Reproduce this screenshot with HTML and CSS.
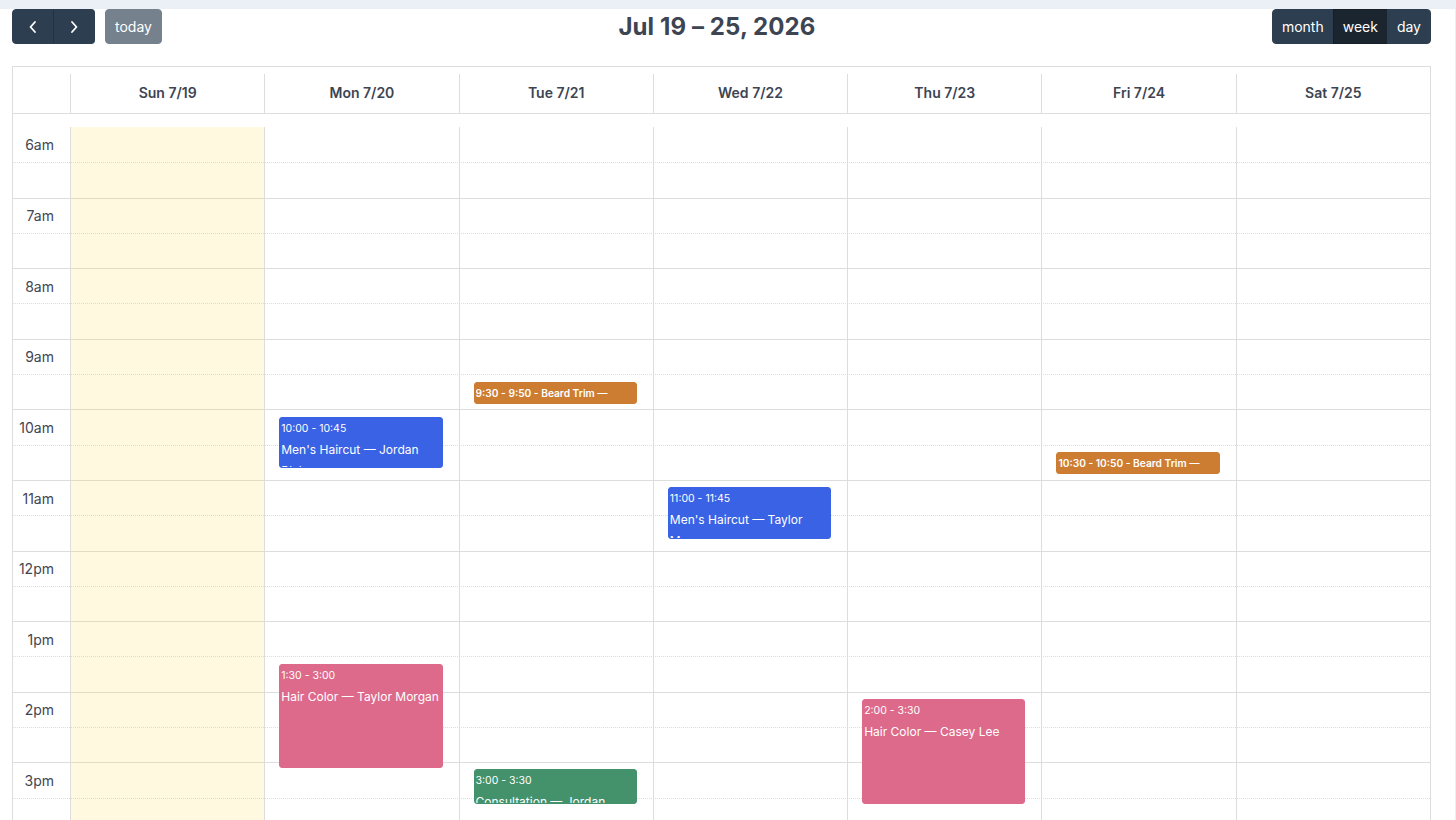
FILE: index.html
```html
<!DOCTYPE html>
<html lang="en">
<head>
<meta charset="utf-8">
<title>Calendar — Week</title>
<link rel="stylesheet" href="styles.css">
</head>
<body>
<div class="panel">
  <div class="toolbar">
    <div class="tb-left">
      <div class="btn-group">
        <button class="btn btn-icon" aria-label="prev">
          <svg width="10" height="14" viewBox="0 0 10 14"><polyline points="7,2 2.5,7 7,12" fill="none" stroke="#fff" stroke-width="1.8" stroke-linecap="round" stroke-linejoin="round"/></svg>
        </button>
        <button class="btn btn-icon" aria-label="next">
          <svg width="10" height="14" viewBox="0 0 10 14"><polyline points="3,2 7.5,7 3,12" fill="none" stroke="#fff" stroke-width="1.8" stroke-linecap="round" stroke-linejoin="round"/></svg>
        </button>
      </div>
      <button class="btn btn-today">today</button>
    </div>
    <h2 class="title">Jul 19 – 25, 2026</h2>
    <div class="btn-group">
      <button class="btn btn-view">month</button>
      <button class="btn btn-view active">week</button>
      <button class="btn btn-view">day</button>
    </div>
  </div>

  <div class="cal">
    <div class="head">
      <div class="hcell axis"></div>
      <div class="hcell">Sun 7/19</div>
      <div class="hcell">Mon 7/20</div>
      <div class="hcell">Tue 7/21</div>
      <div class="hcell">Wed 7/22</div>
      <div class="hcell">Thu 7/23</div>
      <div class="hcell">Fri 7/24</div>
      <div class="hcell">Sat 7/25</div>
    </div>
    <div class="spacer"></div>
    <div class="tgrid">
      <div class="slots">
        <div class="slot first"><div class="label">6am</div><div class="lane"></div></div>
        <div class="slot half"><div class="label"></div><div class="lane"></div></div>
        <div class="slot"><div class="label">7am</div><div class="lane"></div></div>
        <div class="slot half"><div class="label"></div><div class="lane"></div></div>
        <div class="slot"><div class="label">8am</div><div class="lane"></div></div>
        <div class="slot half"><div class="label"></div><div class="lane"></div></div>
        <div class="slot"><div class="label">9am</div><div class="lane"></div></div>
        <div class="slot half"><div class="label"></div><div class="lane"></div></div>
        <div class="slot"><div class="label">10am</div><div class="lane"></div></div>
        <div class="slot half"><div class="label"></div><div class="lane"></div></div>
        <div class="slot"><div class="label">11am</div><div class="lane"></div></div>
        <div class="slot half"><div class="label"></div><div class="lane"></div></div>
        <div class="slot"><div class="label">12pm</div><div class="lane"></div></div>
        <div class="slot half"><div class="label"></div><div class="lane"></div></div>
        <div class="slot"><div class="label">1pm</div><div class="lane"></div></div>
        <div class="slot half"><div class="label"></div><div class="lane"></div></div>
        <div class="slot"><div class="label">2pm</div><div class="lane"></div></div>
        <div class="slot half"><div class="label"></div><div class="lane"></div></div>
        <div class="slot"><div class="label">3pm</div><div class="lane"></div></div>
        <div class="slot half"><div class="label"></div><div class="lane"></div></div>
        <div class="slot"><div class="label">4pm</div><div class="lane"></div></div>
        <div class="slot half"><div class="label"></div><div class="lane"></div></div>
      </div>
      <div class="cols">
        <div class="col-axis"></div>
        <div class="col today"></div>
        <div class="col">
          <div class="ev ev-blue" style="top:289.9px;height:51.5px">
            <div class="ev-time">10:00 - 10:45</div>
            <div class="ev-title">Men's Haircut — Jordan Blake</div>
          </div>
          <div class="ev ev-pink" style="top:537px;height:104.4px">
            <div class="ev-time">1:30 - 3:00</div>
            <div class="ev-title">Hair Color — Taylor Morgan</div>
          </div>
        </div>
        <div class="col">
          <div class="ev ev-orange ev-short" style="top:254.6px;height:22px">
            <div class="ev-line">9:30 - 9:50 - Beard Trim —</div>
          </div>
          <div class="ev ev-green" style="top:642.2px;height:34.8px">
            <div class="ev-time">3:00 - 3:30</div>
            <div class="ev-title">Consultation — Jordan</div>
          </div>
        </div>
        <div class="col">
          <div class="ev ev-blue" style="top:360px;height:51.5px">
            <div class="ev-time">11:00 - 11:45</div>
            <div class="ev-title">Men's Haircut — Taylor Morgan</div>
          </div>
        </div>
        <div class="col">
          <div class="ev ev-pink" style="top:572.3px;height:104.4px">
            <div class="ev-time">2:00 - 3:30</div>
            <div class="ev-title">Hair Color — Casey Lee</div>
          </div>
        </div>
        <div class="col">
          <div class="ev ev-orange ev-short" style="top:325.2px;height:22px">
            <div class="ev-line">10:30 - 10:50 - Beard Trim —</div>
          </div>
        </div>
        <div class="col"></div>
      </div>
    </div>
  </div>
</div>
</body>
</html>
```

FILE: styles.css
```css
* { box-sizing: border-box; }

html, body {
  margin: 0;
  padding: 0;
  height: 100%;
  overflow: hidden;
}

body {
  background: #ebf0f7;
  font-family: Inter, "Liberation Sans", Arial, sans-serif;
  color: #3d4452;
}

.panel {
  margin-top: 9px;
  margin-right: 1px;
  background: #fff;
  padding: 0 24px 0 12px;
  min-height: 1200px;
}

/* toolbar */
.toolbar {
  height: 35px;
  display: flex;
  align-items: center;
  justify-content: space-between;
  margin-bottom: 22px;
}

.tb-left {
  display: flex;
  align-items: center;
  gap: 10px;
}

.btn-group {
  display: flex;
  height: 35px;
}

.btn {
  height: 35px;
  border: 1px solid #2c3e50;
  background: #2c3e50;
  color: #fff;
  font-family: Inter, "Liberation Sans", Arial, sans-serif;
  font-size: 14px;
  line-height: 33px;
  padding: 0 9px;
  margin: 0;
  border-radius: 0;
  display: flex;
  align-items: center;
  justify-content: center;
  cursor: pointer;
}

.btn-group .btn:first-child {
  border-top-left-radius: 4px;
  border-bottom-left-radius: 4px;
}

.btn-group .btn:last-child {
  border-top-right-radius: 4px;
  border-bottom-right-radius: 4px;
}

.btn-group .btn + .btn {
  margin-left: -1px;
}

.btn-icon {
  width: 42px;
  padding: 0;
}

.btn-icon + .btn-icon {
  border-left-color: #24323f;
}

.btn-today {
  width: 57px;
  padding: 0;
  border-radius: 4px;
  opacity: 0.65;
}

.btn-view.active {
  background: #1a252f;
  border-color: #151e27;
}

.title {
  margin: 0;
  font-size: 24px;
  font-weight: 700;
  color: #3d4452;
  letter-spacing: 0.1px;
}

/* calendar */
.cal {
  border: 1px solid #ddd;
}

.head {
  display: grid;
  grid-template-columns: 57px repeat(7, 1fr);
  padding-top: 7px;
  border-bottom: 1px solid #ddd;
}

.hcell {
  height: 39px;
  display: flex;
  align-items: center;
  justify-content: center;
  font-size: 14px;
  font-weight: 600;
  color: #3d4452;
  border-left: 1px solid #ddd;
  padding-bottom: 2px;
}

.hcell.axis {
  border-left: 0;
}

.spacer {
  height: 13px;
}

.tgrid {
  position: relative;
}

.slot {
  height: 35.3px;
  display: grid;
  grid-template-columns: 57px 1fr;
  border-top: 1px solid #ddd;
}

.slot.half {
  border-top: 1px dotted #ddd;
}

.slot.first {
  border-top: 0;
}

.label {
  display: flex;
  align-items: center;
  justify-content: flex-end;
  padding-right: 16px;
  font-size: 14px;
  color: #3f4652;
}

.cols {
  position: absolute;
  top: 0;
  left: 0;
  right: 0;
  bottom: 0;
  display: grid;
  grid-template-columns: 57px repeat(7, 1fr);
}

.col {
  position: relative;
  border-left: 1px solid #ddd;
}

.col.today {
  background: rgba(255, 220, 40, 0.15);
}

/* events */
.ev {
  position: absolute;
  left: 14px;
  right: 16px;
  border: 1px solid;
  border-radius: 3px;
  color: #fff;
  overflow: hidden;
  padding: 3px 1px 0;
}

.ev-time {
  font-size: 10.5px;
  line-height: 16px;
  white-space: nowrap;
}

.ev-title {
  margin-top: 2px;
  font-size: 12px;
  line-height: 21px;
}

.ev-short {
  padding: 0 1px;
}

.ev-line {
  font-size: 10.2px;
  font-weight: 600;
  line-height: 20px;
  white-space: nowrap;
  overflow: hidden;
}

.ev-blue { background: #3a62e5; border-color: #3a62e5; }
.ev-orange { background: #cd7d31; border-color: #cd7d31; }
.ev-pink { background: #dd6a8a; border-color: #dd6a8a; }
.ev-green { background: #43926b; border-color: #43926b; }
```
